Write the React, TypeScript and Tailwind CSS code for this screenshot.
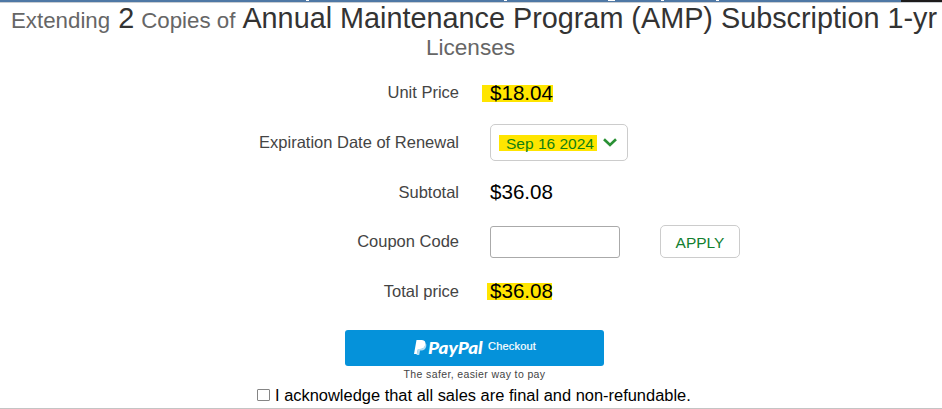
import type { ReactNode } from "react";

function Row({ label, children }: { label: string; children: ReactNode }) {
  return (
    <div className="flex h-[49.6px] items-center">
      <div className="w-[459px] text-right text-[16.5px] text-[#444]">{label}</div>
      <div className="ml-[31px] flex items-center">{children}</div>
    </div>
  );
}

export default function App() {
  return (
    <main className="relative h-[409px] w-[942px] overflow-hidden bg-white font-['Liberation_Sans',Arial,sans-serif] text-black">
      <div className="flex h-[3px] border-b border-[#c9cdd2]">
        <div className="flex h-[2px] w-[901px] bg-[#4f78a5]">
          <span className="ml-[306px] h-px w-[3px] bg-white" />
          <span className="ml-[195px] h-px w-[3px] bg-white" />
          <span className="ml-[101px] h-px w-[7px] bg-white" />
          <span className="ml-[46px] h-px w-[3px] bg-white" />
          <span className="ml-[52px] h-px w-[3px] bg-white" />
        </div>
        <div className="h-[2px] flex-1 bg-[#1d1b1b]" />
      </div>
      <h1 className="h-[62px] whitespace-nowrap text-[22.3px] leading-[30px] text-[#666]">
        <span className="flex h-[30px] items-baseline pl-[11px]">
          <span>Extending</span>
          <span className="ml-[8px] text-[28.8px] text-[#333]">2</span>
          <span className="ml-[7px]">Copies of</span>
          <span className="ml-[7px] text-[28.8px] text-[#333]">Annual Maintenance Program (AMP) Subscription 1-yr</span>
        </span>
        <span className="block pr-px text-center text-[22.6px]">Licenses</span>
      </h1>
      <section className="mt-[3px]">
        <Row label="Unit Price">
          <span className="-ml-[8px] mt-[2px] flex h-[17px] w-[71px] items-center bg-[#ffe500] pl-[8px] text-[20.6px]">$18.04</span>
        </Row>
        <Row label="Expiration Date of Renewal">
          <button className="flex h-[37px] w-[138px] items-center rounded-[5px] border border-[#ccc] pl-[8px] text-[#128012]">
            <span className="mt-[2px] flex h-[16px] w-[98px] items-center whitespace-nowrap bg-[#ffe500] pl-[7px] text-[15.5px]">Sep 16 2024</span>
            <svg className="ml-[6px]" width="14" height="9" viewBox="0 0 14 9" fill="none" stroke="#2a9135" strokeWidth="2.6"><path d="M1 1.2 7 7 13 1.2" /></svg>
          </button>
        </Row>
        <Row label="Subtotal"><span className="text-[20.6px]">$36.08</span></Row>
        <Row label="Coupon Code">
          <input aria-label="Coupon Code" className="h-[32px] w-[130px] rounded-[3px] border border-[#aaa]" />
          <button className="ml-[40px] h-[33px] w-[80px] rounded-[5px] border border-[#ccc] pt-[2px] text-[15.5px] text-[#128030]">APPLY</button>
        </Row>
        <Row label="Total price">
          <span className="-ml-[3px] flex h-[17px] w-[65px] items-center bg-[#ffe500] pl-[3px] text-[20.6px]">$36.08</span>
        </Row>
      </section>
      <div className="ml-[345px] mt-[14px] w-[259px]">
        <button className="flex h-[36px] w-full items-center rounded-[3px] bg-[#0592da] pl-[69px] text-white">
          <svg width="13" height="16" viewBox="0 0 13 16"><path d="M2.5 0H8q4 .5 3.4 4.4Q10.700 9 6 9H4L3 14H0Z" fill="#fff" /><path d="M11.400 3q1.500 1 .8 3.500-1 4-5 4H6L5.200 15H2.500L4 9h2q4.700 0 5.400-6Z" fill="#b5def3" /></svg>
          <span className="ml-px w-[55px]"><span className="block w-[46px] origin-left scale-x-[1.18] text-left font-[Lato,sans-serif] text-[16px] font-black italic leading-none">PayPal</span></span>
          <span className="-mt-[3px] ml-[5px] text-[11px] tracking-[0.200px] [-webkit-text-stroke:0.200px_white]">Checkout</span>
        </button>
        <p className="h-[18px] text-center text-[10.500px] leading-[16px] tracking-[0.380px] text-[#444]">The safer, easier way to pay</p>
      </div>
      <label className="ml-[257px] flex h-[22px] items-center whitespace-nowrap text-[16.450px]">
        <span className="mr-[5px] h-[12px] w-[13px] rounded-[1px] border border-[#858585]" />
        I acknowledge that all sales are final and non-refundable.
      </label>
      <div className="absolute bottom-0 left-0 h-px w-full bg-[#c4c4c4]" />
    </main>
  );
}
